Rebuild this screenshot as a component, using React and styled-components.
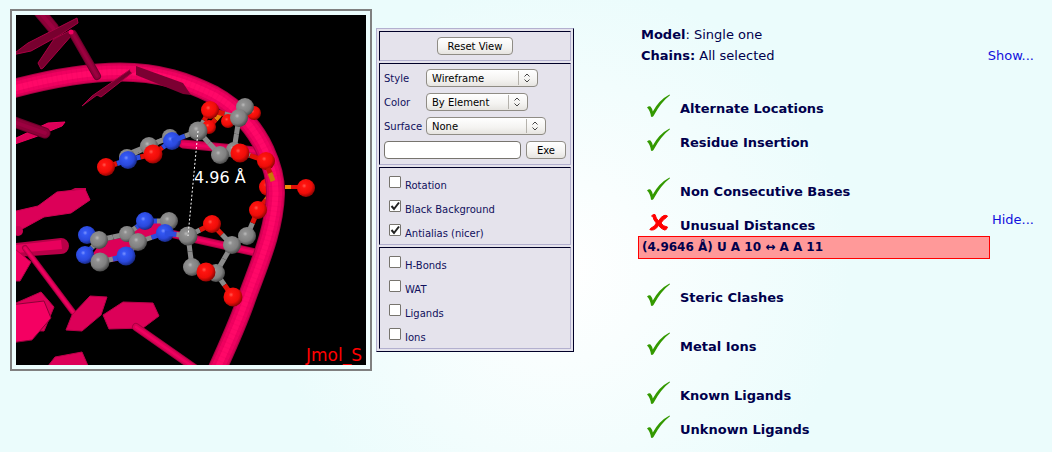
import { useState } from 'react'
import styled, { createGlobalStyle } from 'styled-components'

const GlobalStyle = createGlobalStyle`
  body {
    margin: 0;
    background: #ebfcfc;
    color: #00004c;
    font-family: 'DejaVu Sans', Verdana, sans-serif;
    font-size: 13px;
  }
`

const Page = styled.main`
  display: flex;
  align-items: flex-start;
  box-sizing: border-box;
  min-height: 100vh;
  padding: 9px 18px 8px 10px;
  background: radial-gradient(circle at 560px 270px, #ffffff 0, #f9fefe 90px, #ebfcfc 290px);
`

const Viewer = styled.div`
  flex: none;
  padding: 4px;
  border: 2px solid #808080;
`

const Canvas = styled.svg`
  display: block;
  width: 350px;
  height: 350px;
  background: black;
  font-size: 16px;
`

const Panel = styled.form`
  flex: 0 0 198px;
  box-sizing: border-box;
  display: grid;
  gap: 2px;
  margin: 19px 0 0 4px;
  padding: 2px;
  border: 1px solid;
  border-color: #b3b0cf #000028 #000028 #b3b0cf;
  background: #e5e3ec;
  color: #10105c;
  font-size: 10px;
`

const Group = styled.div`
  padding: 2px 4px;
  border: 1px solid;
  border-color: #000028 #b3b0cf #b3b0cf #000028;
`

const Row = styled.div`
  display: flex;
  align-items: center;
  justify-content: ${(props) => (props.$center ? 'center' : 'flex-start')};
  gap: ${(props) => props.$gap || 0}px;
  height: 24px;
`

const Button = styled.button`
  height: 18px;
  padding: 0 10px;
  border: 1px solid #8f8c85;
  border-radius: 4px;
  background: linear-gradient(#ffffff, #f4f3f1 60%, #e6e4e0);
  color: black;
  font: inherit;
`

const FieldLabel = styled.label`
  flex: 0 0 42px;
`

const SelectBox = styled.span`
  position: relative;
  display: block;
  width: ${(props) => props.$width}px;
`

const Select = styled.select`
  appearance: none;
  display: block;
  width: 100%;
  height: 18px;
  padding: 0 24px 0 5px;
  border: 1px solid #8f8c85;
  border-radius: 4px;
  background: linear-gradient(#ffffff, #f4f3f1 60%, #e6e4e0);
  color: black;
  font: inherit;
`

const Arrows = styled.svg`
  position: absolute;
  top: 2px;
  right: 5px;
  width: 15px;
  height: 14px;
  pointer-events: none;
`

const Command = styled.input`
  flex: 1;
  min-width: 0;
  box-sizing: border-box;
  height: 18px;
  border: 1px solid #77746e;
  border-radius: 4px;
  background: white;
  font: inherit;
`

const Check = styled.input`
  appearance: none;
  flex: none;
  width: 12px;
  height: 12px;
  margin: 0 0 0 5px;
  border: 1px solid #77746e;
  border-radius: 1px;
  background: white;
`

const CheckCell = styled.span`
  position: relative;
  display: flex;
`

const Tick = styled.svg`
  position: absolute;
  top: 1px;
  right: 1px;
  width: 10px;
  height: 10px;
  pointer-events: none;
`

const CheckLabel = styled.label`
  padding-top: 6px;
`

const Results = styled.section`
  flex: 1;
  min-width: 0;
  margin: 15px 0 0 64px;
`

const Info = styled.div`
  display: flex;
  justify-content: space-between;
  padding-left: 3px;
  line-height: 21px;
`

const Link = styled.a`
  margin-left: auto;
  color: #1111dd;
  text-decoration: none;
`

const Tests = styled.div`
  display: grid;
  gap: 15px;
  margin-top: 19px;
`

const Test = styled.div`
  display: flex;
  align-items: center;
  gap: 9px;
  height: 34px;
  padding-left: 9px;
`

const Mark = styled.svg`
  flex: none;
  width: 24px;
  height: 24px;
  margin-top: 7px;
`

const TestName = styled.strong`
  padding-top: 12px;
`

const Problem = styled.div`
  margin-right: 44px;
  padding: 0 3px;
  border: 1px solid red;
  background: #ff9999;
  font-size: 12px;
  font-weight: bold;
  line-height: 21px;
`

const atomFill = { O: 'url(#oxygen)', N: 'url(#nitrogen)', C: 'url(#carbon)' }
const bondColor = { O: '#e01008', N: '#2c4de0', C: '#8a8a8a', P: '#e88008' }

const Atom = ({ a }) => <circle cx={a[1]} cy={a[2]} r={a[3] || 9} fill={atomFill[a[0]]} />

const Bond = ({ from, to }) => {
  const mx = (from[1] + to[1]) / 2
  const my = (from[2] + to[2]) / 2
  return (
    <g strokeWidth="5">
      <line x1={from[1]} y1={from[2]} x2={mx} y2={my} stroke={bondColor[from[0]]} />
      <line x1={mx} y1={my} x2={to[1]} y2={to[2]} stroke={bondColor[to[0]]} />
    </g>
  )
}

const Mol = ({ atoms, bonds }) => (
  <g>
    {bonds.map(([i, j]) => (
      <Bond key={`${i}-${j}`} from={atoms[i]} to={atoms[j]} />
    ))}
    {atoms.map((a, i) => (
      <Atom key={i} a={a} />
    ))}
  </g>
)

const Stick = ({ d, w, dark }) => (
  <g fill="none" strokeLinecap="round">
    <path d={d} strokeWidth={w} stroke={dark ? '#6c002b' : '#a80042'} />
    <path d={d} strokeWidth={w - 2} stroke={dark ? '#8c0038' : '#d80055'} />
    <path d={d} strokeWidth={w / 3} stroke={dark ? '#9c0040' : '#f00060'} />
  </g>
)

const Plate = ({ points, fill = '#dc0058', edge = '#ff1672' }) => (
  <polygon points={points} fill={fill} stroke={edge} strokeWidth="1" />
)

const backbone =
  'M8 90 C45 80 85 72 120 72 C160 72 188 82 214 95 C238 108 256 130 265 150 C271 163 276 178 275.500 194 C274 233 258 266 245 303 C236 328 226 350 214 376'

const uracil = [
  ['C', 127, 157, 8],
  ['C', 149, 146],
  ['C', 170, 137, 8],
  ['O', 106, 167],
  ['N', 128, 160],
  ['O', 153, 154, 9.5],
  ['N', 172, 141],
]

const upperSugar = [
  ['O', 254, 113, 7],
  ['O', 228, 121, 7],
  ['O', 209, 127, 7],
  ['C', 234, 150, 8],
  ['C', 245, 107],
  ['C', 198, 131, 9.5],
  ['O', 210, 110],
  ['C', 239, 118],
  ['C', 220, 155],
  ['O', 240, 153, 9.5],
  ['O', 266, 161],
]

const adenine = [
  ['N', 145, 221],
  ['C', 169, 221],
  ['C', 127, 234, 8],
  ['N', 87, 235],
  ['C', 99, 240],
  ['N', 85, 255],
  ['C', 138, 242],
  ['N', 165, 233],
  ['C', 100, 262, 9.5],
  ['N', 126, 256, 9.5],
]

const lowerSugar = [
  ['C', 188, 236, 9.5],
  ['O', 212, 224],
  ['C', 247, 236],
  ['C', 232, 245],
  ['C', 192, 267],
  ['C', 216, 273],
  ['O', 206, 272, 9.5],
  ['O', 233, 297, 9.5],
  ['O', 258, 210],
]

const Molecule = () => (
  <Canvas viewBox="16 15 350 350" role="img" aria-label="Molecule">
    <defs>
      <radialGradient id="oxygen" cx="0.4" cy="0.38" r="0.65">
        <stop offset="0" stopColor="#ff5a50" />
        <stop offset="0.2" stopColor="#ff1410" />
        <stop offset="0.65" stopColor="#ee0c08" />
        <stop offset="1" stopColor="#850402" />
      </radialGradient>
      <radialGradient id="nitrogen" cx="0.4" cy="0.38" r="0.65">
        <stop offset="0" stopColor="#7c94ff" />
        <stop offset="0.2" stopColor="#3458f4" />
        <stop offset="0.65" stopColor="#2a48dc" />
        <stop offset="1" stopColor="#16267c" />
      </radialGradient>
      <radialGradient id="carbon" cx="0.4" cy="0.38" r="0.65">
        <stop offset="0" stopColor="#bcbcbc" />
        <stop offset="0.2" stopColor="#919191" />
        <stop offset="0.65" stopColor="#808080" />
        <stop offset="1" stopColor="#444444" />
      </radialGradient>
    </defs>

    <Stick d="M183 144 L256 151" w={9} />
    <Stick d="M168 233 L262 254" w={8} />
    <Mol atoms={[['O', 268, 187]]} bonds={[]} />
    <Bond from={['O', 258, 210]} to={['P', 274, 190]} />

    <g fill="none">
      <path d={backbone} stroke="#a80043" strokeWidth="19" />
      <path d={backbone} stroke="#d80056" strokeWidth="17" />
      <path d={backbone} stroke="#f00060" strokeWidth="13" />
      <path d={backbone} stroke="#ff0868" strokeWidth="6" />
      <path d={backbone} stroke="#c8004f" strokeWidth="18" strokeDasharray="1 4" opacity="0.12" />
    </g>

    {/* nucleotides behind the pair */}
    <Stick d="M38 10 L53 28" w={12} dark />
    <Plate points="12,55 28,43 77,18 78,23 60,35 31,51" fill="#78002f" edge="#a80043" />
    <Plate points="38,63 54,39 69,31 72,35 43,68 41,69" fill="#78002f" edge="#a80043" />
    <Stick d="M73 34 L97 76" w={8} dark />
    <circle cx="71" cy="32" r="2.500" fill="#f00060" />
    <Plate points="82,106 92,96 131,69 133,72 101,97 97,95" fill="#78002f" edge="#a80043" />
    <polygon points="136,66 183,83 191,95 183,94 136,75" fill="#7c0032" />
    <circle cx="133" cy="70" r="3" fill="#f00060" />
    <Plate points="12,140 48,123 65,122 62,126 35,137 12,145" edge="#f00060" />
    <Stick d="M14 122 L45 133" w={11} dark />
    <polygon points="71,190 75,188 86,188 86,190" fill="#c0004c" />
    <Plate points="12,212 38,206 57,192 85,189 90,200 71,213 44,217 24,228 12,232" edge="#c8004f" />
    <circle cx="18" cy="231" r="5" fill="#c8004f" />
    <path d="M16 243 L61 238 A8 8 0 0 1 61 254 L16 257Z" fill="#b80048" />
    <path d="M16 245 L61 240 L62 249 L16 253Z" fill="#e8005c" />
    <Plate points="10,245 31,262 20,281 10,281" fill="#f00060" edge="#b80048" />
    <Stick d="M25 248 L73 312" w={6} />
    <Plate points="66,330 72,315 90,296 107,297 101,315 82,331" edge="#b80048" />
    <Plate points="103,315 123,302 153,303 159,316 143,328 109,329" edge="#b80048" />
    <Stick d="M136 327 L196 369" w={8} />
    <Plate points="16,303 41,292 54,307 44,331 16,330" edge="#b80048" />
    <Plate points="10,305 44,301 51,318 32,340 10,343" fill="#f40062" edge="#8c0038" />
    <Plate points="48,366 55,357 82,352 89,368" edge="#b80048" />
    <polygon points="92,255 101,242 130,236 140,243 126,260 100,263" fill="#dc0058" />
    <polygon points="127,237 145,222 169,221 165,235 140,243" fill="#dc0058" />

    <Bond from={['C', 170, 137]} to={['C', 128, 154]} />
    <Mol atoms={uracil} bonds={[[3, 4], [4, 5], [5, 6], [0, 1], [1, 2]]} />
    <Bond from={['N', 172, 141]} to={['C', 198, 131]} />
    <Bond from={['P', 222, 112]} to={['O', 209, 127]} />
    <Mol
      atoms={upperSugar}
      bonds={[[0, 4], [1, 7], [5, 6], [6, 7], [5, 8], [3, 7], [8, 9], [3, 10], [4, 7]]}
    />
    <Mol
      atoms={adenine}
      bonds={[[0, 1], [0, 2], [2, 4], [3, 4], [4, 5], [5, 8], [8, 9], [6, 9], [2, 6], [6, 7], [1, 7]]}
    />
    <Bond from={['N', 165, 233]} to={['C', 188, 236]} />
    <Mol
      atoms={lowerSugar}
      bonds={[[0, 1], [1, 3], [2, 3], [0, 4], [4, 6], [3, 5], [5, 7], [2, 8]]}
    />
    <path d="M268 168 L271 175" stroke="#c81008" strokeWidth="5" />
    <path d="M270 173 L273 181" stroke="#c87808" strokeWidth="5" />
    <path d="M285 187 H292" stroke="#f08808" strokeWidth="4" />
    <path d="M291 187 H300" stroke="#e01008" strokeWidth="4" />
    <Atom a={['O', 306, 188]} />

    <path d="M198 131 L188 236" stroke="white" strokeWidth="1" strokeDasharray="2 2" />
    <text x="194" y="183" fill="white">4.96 Å</text>
    <text x="306" y="361" fill="red" fontSize="17">Jmol_S</text>
  </Canvas>
)

const Field = ({ id, label, width, options }) => (
  <Row>
    <FieldLabel htmlFor={id}>{label}</FieldLabel>
    <SelectBox $width={width}>
      <Select id={id}>
        {options.map((option) => (
          <option key={option}>{option}</option>
        ))}
      </Select>
      <Arrows viewBox="0 0 15 14" fill="none">
        <path d="M0.500 0V14" stroke="#b5b2ac" />
        <path d="M6.500 5.500 L9 3 L11.500 5.500 M6.500 8.500 L9 11 L11.500 8.500" stroke="#444" />
      </Arrows>
    </SelectBox>
  </Row>
)

const Option = ({ id, label, initial = false }) => {
  const [checked, setChecked] = useState(initial)

  return (
    <Row $gap={4}>
      <CheckCell>
        <Check type="checkbox" id={id} checked={checked} onChange={() => setChecked(!checked)} />
        {checked && (
          <Tick viewBox="0 0 10 10">
            <path d="M1.500 5 L4 8 L9 1.500" fill="none" stroke="#222" strokeWidth="2" />
          </Tick>
        )}
      </CheckCell>
      <CheckLabel htmlFor={id}>{label}</CheckLabel>
    </Row>
  )
}

const Passed = () => (
  <Mark viewBox="0 0 24 24" role="img" aria-label="passed">
    <path
      d="M0 13.500 Q2 11.500 3.500 12.500 Q5 14 5.800 17.500 Q12 6 22.500 0.500 L23 1.300 Q14 8 6.500 22 Q5 23.500 4 22.500 Q3 16 0 13.500Z"
      fill="#339900"
    />
  </Mark>
)

const Failed = () => (
  <Mark viewBox="0 0 24 24" role="img" aria-label="failed">
    <path
      d="M4.500 5 Q6 3 8 3.500 Q9 7.500 11.500 10 Q14 5.500 17 4.500 Q19 4 20.500 5 L19.500 6.500 Q16 8.500 14 12 Q16 15.500 20.500 16 Q19.500 19.500 17.500 19 Q14 18 11.500 14.500 Q9.500 18 6.500 18.800 Q4 19.500 2.800 18.500 Q3.500 17 5 16.500 Q8 15 9.300 12 Q6.500 9 6 6 Q5.500 5 4.500 5Z"
      fill="red"
      stroke="red"
    />
  </Mark>
)

const Result = ({ name, failed, children }) => (
  <Test>
    {failed ? <Failed /> : <Passed />}
    <TestName>{name}</TestName>
    {children}
  </Test>
)

export default function App() {
  return (
    <>
      <GlobalStyle />
      <Page>
        <Viewer>
          <Molecule />
        </Viewer>

        <Panel onSubmit={(e) => e.preventDefault()}>
          <Group>
            <Row $center>
              <Button type="reset">Reset View</Button>
            </Row>
          </Group>
          <Group>
            <Field id="style" label="Style" width={112} options={['Wireframe', 'Cartoon']} />
            <Field id="color" label="Color" width={102} options={['By Element', 'By Chain']} />
            <Field id="surface" label="Surface" width={120} options={['None', 'Solvent']} />
            <Row $gap={5}>
              <Command type="text" aria-label="Command" />
              <Button type="submit">Exe</Button>
            </Row>
          </Group>
          <Group>
            <Option id="rotation" label="Rotation" />
            <Option id="background" label="Black Background" initial />
            <Option id="antialias" label="Antialias (nicer)" initial />
          </Group>
          <Group>
            <Option id="hbonds" label="H-Bonds" />
            <Option id="wat" label="WAT" />
            <Option id="ligands" label="Ligands" />
            <Option id="ions" label="Ions" />
          </Group>
        </Panel>

        <Results>
          <Info>
            <span>
              <b>Model</b>: Single one
            </span>
          </Info>
          <Info>
            <span>
              <b>Chains:</b> All selected
            </span>
            <Link href="#chains">Show...</Link>
          </Info>

          <Tests>
            <div>
              <Result name="Alternate Locations" />
              <Result name="Residue Insertion" />
            </div>
            <div>
              <Result name="Non Consecutive Bases" />
              <Result name="Unusual Distances" failed>
                <Link href="#distances">Hide...</Link>
              </Result>
              <Problem>(4.9646 Å) U A 10 ↔ A A 11</Problem>
            </div>
            <Result name="Steric Clashes" />
            <Result name="Metal Ions" />
            <div>
              <Result name="Known Ligands" />
              <Result name="Unknown Ligands" />
            </div>
          </Tests>
        </Results>
      </Page>
    </>
  )
}
